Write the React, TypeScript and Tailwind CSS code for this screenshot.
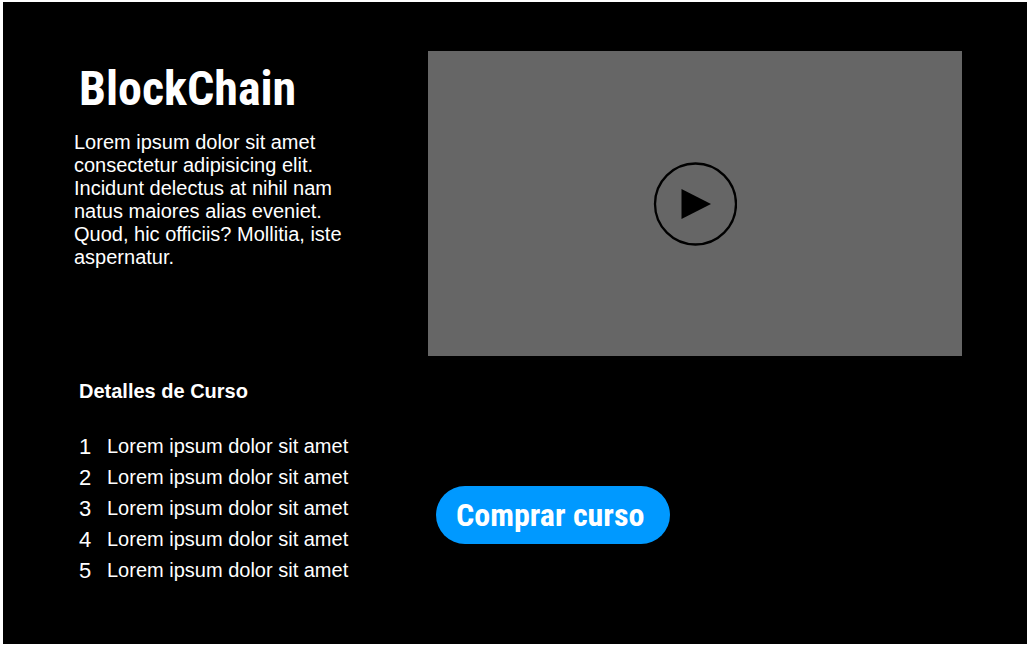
const lessons = [1, 2, 3, 4, 5];

function VideoPreview() {
  return (
    <div className="flex aspect-[534/305] w-full items-center justify-center bg-[#666666]">
      <button type="button" aria-label="Reproducir video" className="rounded-full">
        <svg viewBox="0 0 84 84" className="block size-[84px]" aria-hidden="true">
          <circle cx="42.5" cy="42" r="40.5" fill="none" stroke="#000" strokeWidth="2.3" />
          <path d="M28.500 27 58 42 28.500 57Z" fill="#000" />
        </svg>
      </button>
    </div>
  );
}

export default function App() {
  return (
    <div className="min-h-screen bg-white pt-[2px] pr-[3px] pb-[3px] pl-[3px] font-['Liberation_Sans',Arial,sans-serif]">
      <main className="grid min-h-[calc(100vh-5px)] grid-cols-[357fr_534fr] content-start bg-black pt-[49px] pr-[65px] pb-12 pl-[68px] text-[20px] leading-[23px] text-white">
        <section className="pt-[10px]">
          <h1 className="px-2 font-['Roboto_Condensed','Liberation_Sans_Narrow',Roboto,sans-serif] text-[48px] leading-[56px] font-bold">
            BlockChain
          </h1>
          <p className="mt-[14px] max-w-[280px] px-[3px]">
            Lorem ipsum dolor sit amet consectetur adipisicing elit. Incidunt delectus at nihil nam
            natus maiores alias eveniet. Quod, hic officiis? Mollitia, iste aspernatur.
          </p>
        </section>
        <VideoPreview />
        <section className="px-2 pt-6">
          <h2 className="font-bold">Detalles de Curso</h2>
          <ol className="mt-8 flex flex-col gap-2">
            {lessons.map((n) => (
              <li key={n} className="flex items-center">
                <span className="w-7 text-[22px]">{n}</span>
                <span>Lorem ipsum dolor sit amet</span>
              </li>
            ))}
          </ol>
        </section>
        <div className="px-2 pt-[130px]">
          <button
            type="button"
            className="h-[58px] rounded-full bg-[#0099ff] pr-[26px] pl-5 font-['Roboto_Condensed','Liberation_Sans_Narrow',Roboto,sans-serif] text-[32px] leading-[40px] font-bold text-white"
          >
            Comprar curso
          </button>
        </div>
      </main>
    </div>
  );
}
